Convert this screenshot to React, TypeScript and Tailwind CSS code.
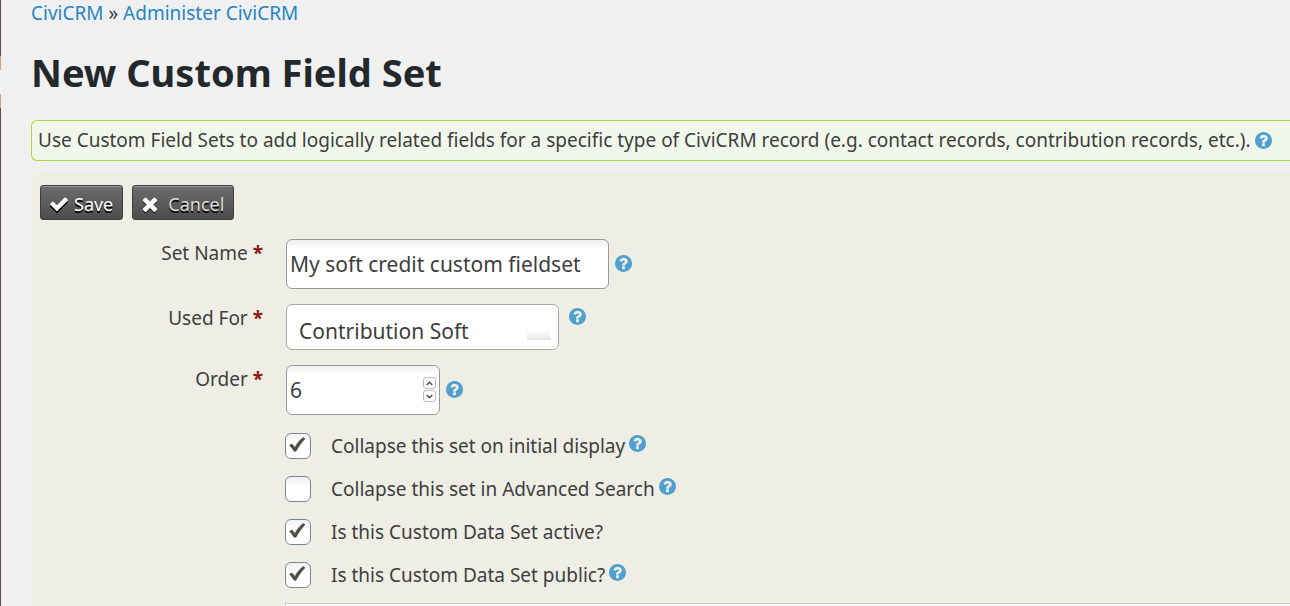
import { useState, type ReactNode } from "react";

const ICONS = {
  help: {
    box: "128 128 1536 1536",
    d: "M1024 1376v-192q0-14-9-23t-23-9h-192q-14 0-23 9t-9 23v192q0 14 9 23t23 9h192q14 0 23-9t9-23zm256-672q0-88-55.5-163t-138.5-116-170-41q-243 0-371 213-15 24 8 42l132 100q7 6 19 6 16 0 25-12 53-68 86-92 34-24 86-24 48 0 85.5 26t37.5 59q0 38-20 61t-68 45q-63 28-115.5 86.5t-52.5 125.5v36q0 14 9 23t23 9h192q14 0 23-9t9-23q0-19 21.5-49.5t54.5-49.5q32-18 49-28.5t46-35 44.5-48 28-60.5 12.5-81zm384 192q0 209-103 385.5t-279.5 279.5-385.5 103-385.5-103-279.5-279.5-103-385.5 103-385.5 279.5-279.5 385.5-103 385.5 103 279.5 279.5 103 385.5z",
  },
  check: {
    box: "100 200 1592 1592",
    d: "M1671 566q0 40-28 68l-724 724-136 136q-28 28-68 28t-68-28l-136-136-362-362q-28-28-28-68t28-68l136-136q28-28 68-28t68 28l294 295 656-657q28-28 68-28t68 28l136 136q28 28 28 68z",
  },
  times: {
    box: "240 320 1312 1312",
    d: "M1490 1322q0 40-28 68l-136 136q-28 28-68 28t-68-28l-294-294-294 294q-28 28-68 28t-68-28l-136-136q-28-28-28-68t28-68l294-294-294-294q-28-28-28-68t28-68l136-136q28-28 68-28t68 28l294 294 294-294q28-28 68-28t68 28l136 136q28 28 28 68t-28 68l-294 294 294 294q28 28 28 68z",
  },
};

function Icon({ name, className }: { name: keyof typeof ICONS; className: string }) {
  return (
    <svg viewBox={ICONS[name].box} fill="currentColor" className={className} aria-hidden="true">
      <path d={ICONS[name].d} />
    </svg>
  );
}

function Help() {
  return (
    <button type="button" aria-label="Help" className="shrink-0 text-[#4f9fcf]">
      <Icon name="help" className="block size-[17px]" />
    </button>
  );
}

const buttonStyle =
  "flex h-[35px] items-center rounded-[3px] border border-[#3e3e3e] bg-linear-to-b from-[#6c6c6c] to-[#4d4d4d] pt-1 pr-[9px] pl-[9px] text-[18px] shadow-[inset_0_1px_0_#9a9a9a] text-shadow-[0_2px_0_#000]";

function Row({ id, label, children }: { id: string; label: string; children: ReactNode }) {
  return (
    <div className="flex gap-[23px]">
      <label htmlFor={id} className="w-[232px] shrink-0 text-right leading-7">
        {label} <span className="font-bold text-[#8b1a12]">*</span>
      </label>
      {children}
    </div>
  );
}

function Check({ id, label, initial, help }: { id: string; label: string; initial: boolean; help?: boolean }) {
  const [on, setOn] = useState(initial);
  return (
    <div className="flex h-[26px] items-center">
      <span className="relative mr-5 size-[26px] shrink-0">
        <input
          id={id}
          type="checkbox"
          checked={on}
          onChange={(e) => setOn(e.target.checked)}
          className="block size-[26px] appearance-none rounded-md border border-[#7c8794] bg-white bg-linear-to-b from-[#f0f0f4] to-white to-40%"
        />
        {on && (
          <svg viewBox="0 0 26 26" className="pointer-events-none absolute inset-0 size-[26px]" aria-hidden="true">
            <path d="M4.5 12.2 7 11l2.9 3.4C12 10.500 14.800 7 18.200 4.500L20 5.700C16.300 9.500 13.500 13.700 11 18.200H9C7.600 16 6.200 14 4.500 12.200Z" fill="#514b46" stroke="#514b46" strokeWidth="0.600" />
          </svg>
        )}
      </span>
      <label htmlFor={id} className="mr-1 whitespace-nowrap">
        {label}
      </label>
      {help && (
        <span className="pb-0.5">
          <Help />
        </span>
      )}
    </div>
  );
}

const fieldStyle =
  "rounded-md border border-[#999] bg-white bg-linear-to-b from-[#f0f0f0] to-white to-20% px-[3px] text-[21px]";

export default function App() {
  const [name, setName] = useState("My soft credit custom fieldset");
  const [order, setOrder] = useState(6);
  return (
    <div className="flex h-screen overflow-hidden bg-[#f0f0f0] font-['Noto_Sans','Open_Sans',sans-serif] text-[19px] text-[#3e3e3e]">
      <div className="flex w-px shrink-0 flex-col" aria-hidden="true">
        <div className="h-14 bg-[#5a4f4b]" />
        <div className="h-[14px] bg-[#cfa585]" />
        <div className="h-6 bg-[#f6f4f2]" />
        <div className="h-[14px] bg-[#cfa585]" />
        <div className="grow bg-[#5a4f4b]" />
      </div>
      <main className="min-w-0 grow pl-[30px]">
        <nav aria-label="Breadcrumb" className="leading-[26px]">
          <a href="#civicrm" className="text-[#2786c2]">CiviCRM</a> »{" "}
          <a href="#administer" className="text-[#2786c2]">Administer CiviCRM</a>
        </nav>
        <h1 className="pt-[22px] pb-6 text-[38px] leading-[48px] font-bold text-[#23282d]">New Custom Field Set</h1>
        <div className="flex h-[41px] items-center gap-1 rounded-l-md border border-r-0 border-[#acd835] bg-[#f1f8eb] pl-1.5 whitespace-nowrap">
          <p>
            Use Custom Field Sets to add logically related fields for a specific type of CiviCRM record (e.g. contact
            records, contribution records, etc.).
          </p>
          <Help />
        </div>
        <form className="mt-3 rounded-tl-md bg-[#eeeee5] pt-3" onSubmit={(e) => e.preventDefault()}>
          <div className="flex gap-[9px] pl-[9px]">
            <button type="submit" className={`${buttonStyle} gap-1.5 text-white`}>
              <Icon name="check" className="size-[18px] drop-shadow-[0_2px_0_#000]" />
              Save
            </button>
            <button type="button" className={`${buttonStyle} gap-2.5 text-[#dedfd0]`}>
              <Icon name="times" className="size-4 text-white drop-shadow-[0_1px_0_#000]" />
              Cancel
            </button>
          </div>
          <div className="mt-[19px] flex flex-col gap-[15px]">
            <Row id="set-name" label="Set Name">
              <div className="flex gap-1.5">
                <input
                  id="set-name"
                  value={name}
                  onChange={(e) => setName(e.target.value)}
                  className={`${fieldStyle} h-[50px] w-[323px]`}
                />
                <span className="pt-3">
                  <Help />
                </span>
              </div>
            </Row>
            <Row id="used-for" label="Used For">
              <div className="flex gap-2.5">
                <div className="relative">
                  <select
                    id="used-for"
                    className="block h-[46px] w-[273px] appearance-none rounded-md border border-[#aaa] bg-white pt-2.5 pl-3 text-[21px]"
                  >
                    <option>Contribution Soft</option>
                  </select>
                  <span className="pointer-events-none absolute right-2 bottom-2.5 h-2.5 w-6 bg-linear-to-b from-white to-[#e6e6e6]" />
                </div>
                <span>
                  <Help />
                </span>
              </div>
            </Row>
            <Row id="order" label="Order">
              <div className="flex gap-1.5">
                <div className="relative">
                  <input
                    id="order"
                    inputMode="numeric"
                    value={order}
                    onChange={(e) => setOrder(Number(e.target.value) || 0)}
                    className={`${fieldStyle} block h-[50px] w-[154px]`}
                  />
                  <div className="absolute top-3 right-1 flex flex-col gap-px">
                    <button
                      type="button"
                      aria-label="Increase order"
                      onClick={() => setOrder(order + 1)}
                      className="flex h-3 w-[13px] items-center justify-center rounded-[3px] border border-[#bbb] bg-white"
                    >
                      <svg viewBox="0 0 7 5" className="h-[5px] w-[7px]" fill="none" stroke="#444" strokeWidth="1.300">
                        <path d="M.7 4 3.500 1.200 6.300 4" />
                      </svg>
                    </button>
                    <button
                      type="button"
                      aria-label="Decrease order"
                      onClick={() => setOrder(order - 1)}
                      className="flex h-3 w-[13px] items-center justify-center rounded-[3px] border border-[#bbb] bg-white"
                    >
                      <svg viewBox="0 0 7 5" className="h-[5px] w-[7px]" fill="none" stroke="#444" strokeWidth="1.300">
                        <path d="M.7 1 3.500 3.800 6.300 1" />
                      </svg>
                    </button>
                  </div>
                </div>
                <span className="pt-3">
                  <Help />
                </span>
              </div>
            </Row>
          </div>
          <div className="mt-[18px] flex flex-col gap-[17px] pl-[254px]">
            <Check id="collapse-display" label="Collapse this set on initial display" initial help />
            <Check id="collapse-search" label="Collapse this set in Advanced Search" initial={false} help />
            <Check id="active" label="Is this Custom Data Set active?" initial />
            <Check id="public" label="Is this Custom Data Set public?" initial help />
          </div>
          <div className="mt-[15px] pl-[254px]">
            <textarea
              aria-label="Pre-form help"
              className="block h-40 w-full resize-none border border-r-0 border-[#ccc] bg-[#fafafa]"
            />
          </div>
        </form>
      </main>
    </div>
  );
}
